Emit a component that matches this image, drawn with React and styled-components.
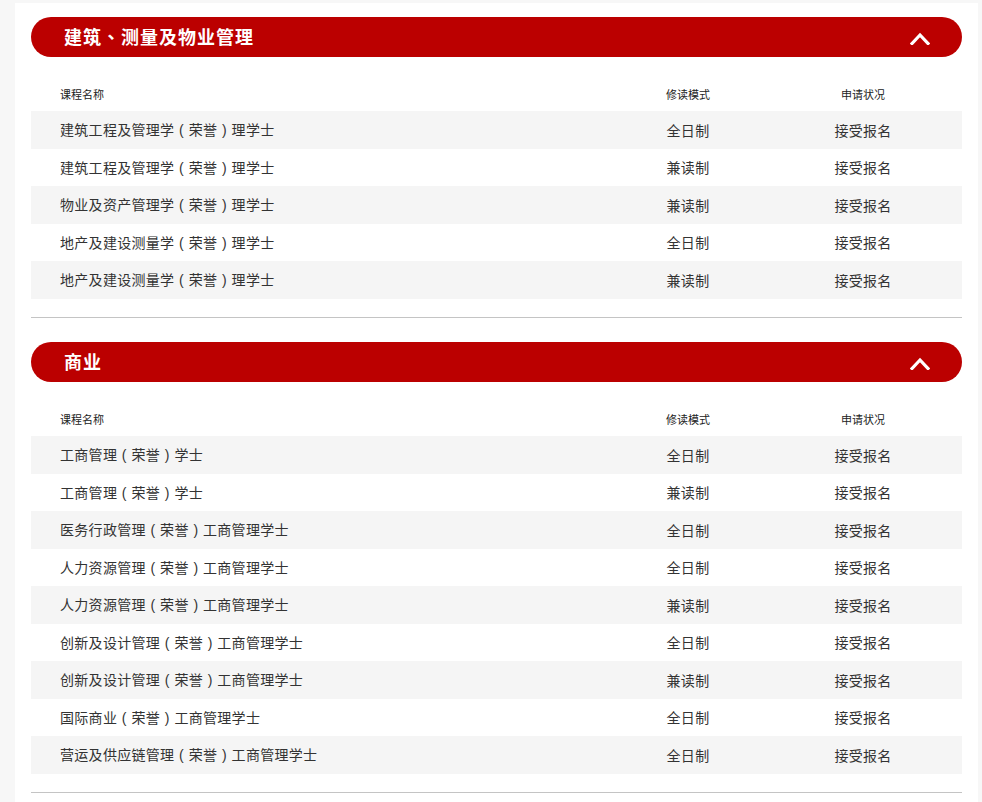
import React from "react";
import styled, { createGlobalStyle } from "styled-components";

const Global = createGlobalStyle`
  html, body { margin: 0; padding: 0; background: #f7f7f7; }
  body { font-family: "Noto Sans CJK SC", "Noto Sans", sans-serif; color: #333; }
`;

const Page = styled.div`
  margin: 3px 4px 0 15px;
  background: #fff;
  padding: 14px 16px 40px 16px;
  min-height: 800px;
`;

const Section = styled.section`
  display: flex;
  flex-direction: column;
  & + & { margin-top: 24px; }
`;

const Bar = styled.div`
  height: 40px;
  box-sizing: border-box;
  border-radius: 20px;
  background: #bb0000;
  display: flex;
  align-items: center;
  justify-content: space-between;
  padding: 0 32px 3px 33px;
  color: #fff;
`;

const Title = styled.h2`
  margin: 0;
  font-family: "Noto Sans CJK TC", "Noto Sans CJK SC", sans-serif;
  font-size: 18px;
  font-weight: 700;
  letter-spacing: 1px;
  line-height: 24px;
`;

const Chevron = styled.svg`
  width: 20px;
  height: 13px;
  display: block;
  margin-top: 5px;
`;

const Grid = styled.div`
  display: grid;
  grid-template-columns: 581px 152px 1fr;
  align-items: center;
  height: ${(p) => (p.$head ? "auto" : "37.5px")};
  padding: ${(p) => (p.$head ? "29px 0 9px" : "0")};
  background: ${(p) => (p.$shaded ? "#f5f5f5" : "transparent")};
  font-size: ${(p) => (p.$head ? "11px" : "14px")};
  line-height: ${(p) => (p.$head ? "16px" : "20px")};
  color: ${(p) => (p.$head ? "#222" : "#333")};
  letter-spacing: ${(p) => (p.$head ? "0" : "0.3px")};
`;

const NameCell = styled.div`
  padding-left: 29px;
`;

const CenterCell = styled.div`
  text-align: center;
`;

const Paren = styled.span`
  display: inline-block;
  width: 14px;
  text-align: center;
  font-family: "Liberation Sans", sans-serif;
  letter-spacing: 0;
  margin-right: 0.3px;
`;

const Divider = styled.hr`
  margin: 18.5px 0 0;
  border: 0;
  border-top: 1px solid #c4c4c4;
  height: 0;
`;

const sections = [
  {
    title: "建筑、测量及物业管理",
    rows: [
      ["建筑工程及管理学（荣誉）理学士", "全日制"],
      ["建筑工程及管理学（荣誉）理学士", "兼读制"],
      ["物业及资产管理学（荣誉）理学士", "兼读制"],
      ["地产及建设测量学（荣誉）理学士", "全日制"],
      ["地产及建设测量学（荣誉）理学士", "兼读制"],
    ],
  },
  {
    title: "商业",
    rows: [
      ["工商管理（荣誉）学士", "全日制"],
      ["工商管理（荣誉）学士", "兼读制"],
      ["医务行政管理（荣誉）工商管理学士", "全日制"],
      ["人力资源管理（荣誉）工商管理学士", "全日制"],
      ["人力资源管理（荣誉）工商管理学士", "兼读制"],
      ["创新及设计管理（荣誉）工商管理学士", "全日制"],
      ["创新及设计管理（荣誉）工商管理学士", "兼读制"],
      ["国际商业（荣誉）工商管理学士", "全日制"],
      ["营运及供应链管理（荣誉）工商管理学士", "全日制"],
    ],
  },
];

function CourseName({ text }) {
  const parts = text.split(/([（）])/);
  return parts.map((p, i) =>
    p === "（" ? (
      <Paren key={i}>(</Paren>
    ) : p === "）" ? (
      <Paren key={i}>)</Paren>
    ) : (
      <React.Fragment key={i}>{p}</React.Fragment>
    )
  );
}

export default function App() {
  return (
    <>
      <Global />
      <Page>
        {sections.map((s) => (
          <Section key={s.title}>
            <Bar>
              <Title>{s.title}</Title>
              <Chevron viewBox="0 0 20 13" fill="none">
                <polyline points="2,11.5 10,3 18,11.5" stroke="#fff" strokeWidth="3.2" strokeLinecap="square" />
              </Chevron>
            </Bar>
            <Grid $head>
              <NameCell>课程名称</NameCell>
              <CenterCell>修读模式</CenterCell>
              <CenterCell>申请状况</CenterCell>
            </Grid>
            {s.rows.map((r, i) => (
              <Grid key={i} $shaded={i % 2 === 0}>
                <NameCell>
                  <CourseName text={r[0]} />
                </NameCell>
                <CenterCell>{r[1]}</CenterCell>
                <CenterCell>接受报名</CenterCell>
              </Grid>
            ))}
            <Divider />
          </Section>
        ))}
      </Page>
    </>
  );
}
